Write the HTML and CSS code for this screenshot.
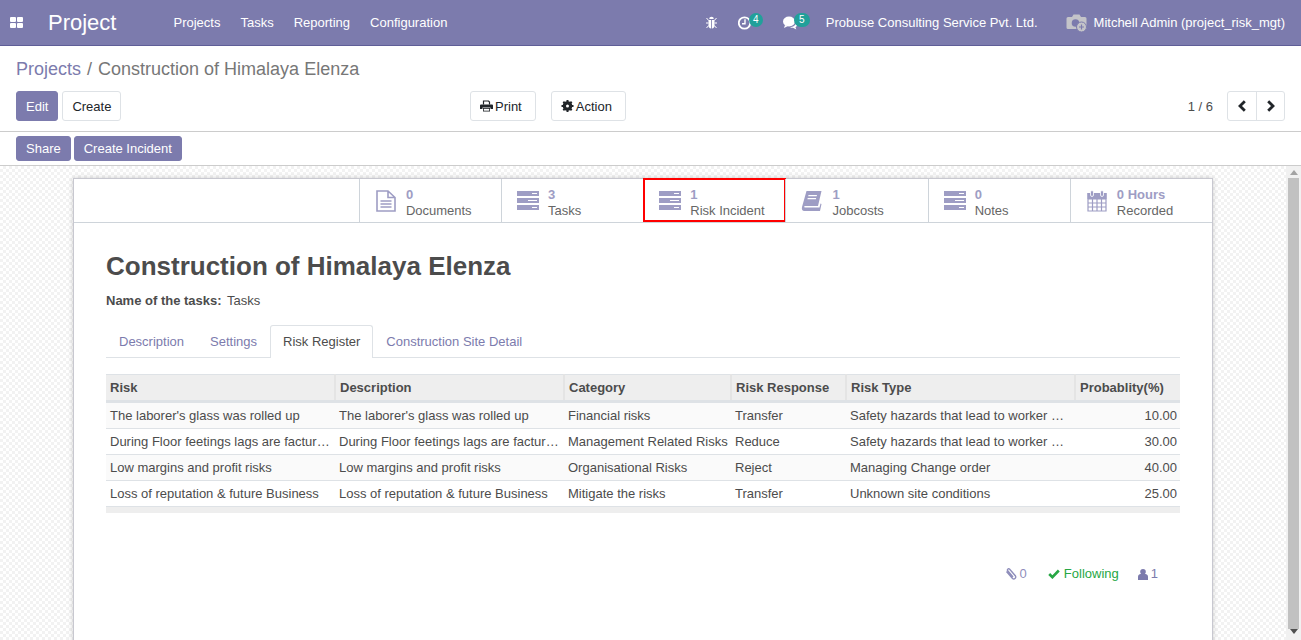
FILE: index.html
```html
<!DOCTYPE html>
<html lang="en">
  <head>
    <meta charset="UTF-8" />
    <title>Construction of Himalaya Elenza - Project</title>
    <link rel="stylesheet" href="styles.css">
  </head>
  <body>
    <!-- Top menu -->
    <header class="navbar">
      <svg class="apps-icon" width="14" height="12" viewBox="0 0 14 12"><path d="M0 1a1 1 0 0 1 1-1h4a1 1 0 0 1 1 1v3a1 1 0 0 1-1 1H1a1 1 0 0 1-1-1zM7 1a1 1 0 0 1 1-1h4a1 1 0 0 1 1 1v3a1 1 0 0 1-1 1H8a1 1 0 0 1-1-1zM0 7a1 1 0 0 1 1-1h4a1 1 0 0 1 1 1v3a1 1 0 0 1-1 1H1a1 1 0 0 1-1-1zM7 7a1 1 0 0 1 1-1h4a1 1 0 0 1 1 1v3a1 1 0 0 1-1 1H8a1 1 0 0 1-1-1z" fill="#fff"/></svg>
      <span class="brand">Project</span>
      <nav class="menu">
        <a href="#">Projects</a>
        <a href="#">Tasks</a>
        <a href="#">Reporting</a>
        <a href="#">Configuration</a>
      </nav>
      <div class="systray">
        <svg class="bug" width="13" height="13" viewBox="0 0 13 13"><path d="M4.200 3a2.300 2.300 0 0 1 4.600 0zM3.500 4h2.600v8.500a3 3 0 0 1-2.600-3zM6.900 4h2.600v5.500a3 3 0 0 1-2.600 3z" fill="#fff"/><path d="M1.500 2l2.200 2.500M11.500 2L9.300 4.500M1 7h2.500M9.500 7H12M1.500 12l2.200-2.500M11.500 12L9.300 9.500" fill="none" stroke="#fff" stroke-width="1"/></svg>
        <span class="tray-item">
          <svg width="14" height="14" viewBox="0 0 14 14"><circle cx="6.500" cy="7" r="5.700" fill="none" stroke="#fff" stroke-width="1.800"/><path d="M7 3.300V7.800H4" fill="none" stroke="#fff" stroke-width="1.400"/></svg>
          <span class="count">4</span>
        </span>
        <span class="tray-item tray-chat">
          <svg width="15" height="14" viewBox="0 0 15 14"><ellipse cx="6" cy="5.500" rx="6" ry="5" fill="#fff"/><path d="M2 9L1 12l4-2z" fill="#fff"/><path d="M13 6.500c1.500 1.500 1.500 3.500-.5 4.700l.8 2.300-3.300-1.700c-1 0-2 0-3-.6 3 0 6-2 6-4.700z" fill="#fff"/></svg>
          <span class="count count-wide">5</span>
        </span>
        <span class="company">Probuse Consulting Service Pvt. Ltd.</span>
        <span class="user">
          <svg width="22" height="20" viewBox="0 0 22 20"><path d="M2 4h4l1.500-2.500h6L15 4h4a1.500 1.500 0 0 1 1.500 1.500V16H2a1.500 1.500 0 0 1-1.500-1.500v-9A1.500 1.500 0 0 1 2 4z" fill="#c4c4c9"/><circle cx="9.500" cy="10" r="3.800" fill="#7c7bad"/><circle cx="15.500" cy="14" r="5" fill="#c4c4c9" stroke="#7c7bad" stroke-width="1"/><path d="M15.500 11.500v5M13 14h5" stroke="#7c7bad" stroke-width="1.200"/></svg>
          Mitchell Admin (project_risk_mgt)
        </span>
      </div>
    </header>

    <!-- Breadcrumb and buttons -->
    <section class="control-panel">
      <ol class="breadcrumb">
        <li><a href="#">Projects</a></li>
        <li class="sep">/</li>
        <li class="current">Construction of Himalaya Elenza</li>
      </ol>
      <div class="cp-row">
        <div class="cp-left">
          <button class="btn btn-primary">Edit</button>
          <button class="btn">Create</button>
        </div>
        <div class="cp-sidebar">
          <button class="btn">
            <svg width="13" height="12" viewBox="0 0 13 12"><path d="M3.500 4.500V1h5l1 1v2.500" fill="none" stroke="#212529" stroke-width="1.200"/><path d="M1 4.500h11a1 1 0 0 1 1 1V9h-2.500V7.500h-8V9H0V5.500a1 1 0 0 1 1-1z" fill="#212529"/><path d="M3 8h7v3.500H3z" fill="#212529"/><path d="M3.800 8.800h5.400v1.900H3.800z" fill="#fff"/></svg>
            Print
          </button>
          <button class="btn">
            <svg width="13" height="12" viewBox="0 0 13 12"><circle cx="6.500" cy="6" r="3.500" fill="none" stroke="#212529" stroke-width="2.600"/><path d="M6.500 0v12M.5 6h12M2.300 1.800l8.400 8.400M10.700 1.800l-8.400 8.400" stroke="#212529" stroke-width="2"/><circle cx="6.500" cy="6" r="1.500" fill="#fff"/></svg>
            Action
          </button>
        </div>
        <div class="pager">
          <span class="pager-value">1 / 6</span>
          <div class="pager-buttons">
            <button class="btn-page"><svg width="10" height="12" viewBox="0 0 10 12"><path d="M7.800 1.200L3 6l4.800 4.800" fill="none" stroke="#212529" stroke-width="2.800"/></svg></button>
            <button class="btn-page"><svg width="10" height="12" viewBox="0 0 10 12"><path d="M2.200 1.200L7 6l-4.800 4.800" fill="none" stroke="#212529" stroke-width="2.800"/></svg></button>
          </div>
        </div>
      </div>
    </section>

    <div class="statusbar">
      <button class="btn btn-primary btn-small">Share</button>
      <button class="btn btn-primary btn-small">Create Incident</button>
    </div>

    <div class="content">
      <div class="form-background">
        <div class="sheet">
          <div class="button-box">
            <a class="stat-button" href="#">
              <svg class="stat-icon" width="20" height="22" viewBox="0 0 20 22"><path d="M1 1h11l7 6.500V21H1zM12 1v6.500h7M4.500 11h11M4.500 14h11M4.500 17h11" fill="none" stroke="#9e9dc4" stroke-width="1.600"/></svg>
              <span class="stat-text"><b>0</b><span>Documents</span></span>
            </a>
            <a class="stat-button" href="#">
              <svg class="stat-icon" width="22" height="19" viewBox="0 0 22 19"><path d="M0 0h22v5H0zM0 7h22v5H0zM0 14h22v5H0z" fill="#9e9dc4"/><path d="M15 2h5v1h-5zM11 9h9v1h-9zM15 16h5v1h-5z" fill="#fff"/></svg>
              <span class="stat-text"><b>3</b><span>Tasks</span></span>
            </a>
            <a class="stat-button stat-highlight" href="#">
              <svg class="stat-icon" width="22" height="19" viewBox="0 0 22 19"><path d="M0 0h22v5H0zM0 7h22v5H0zM0 14h22v5H0z" fill="#9e9dc4"/><path d="M15 2h5v1h-5zM11 9h9v1h-9zM15 16h5v1h-5z" fill="#fff"/></svg>
              <span class="stat-text"><b>1</b><span>Risk Incident</span></span>
            </a>
            <a class="stat-button" href="#">
              <svg class="stat-icon" width="21" height="20" viewBox="0 0 21 20"><path d="M5 0h15l-3.500 15H3.500c-1 0-1.200 1.500 0 1.500H18l1-4 1 .5-1.500 7H3C.5 20 0 18 .5 16z" fill="#9e9dc4"/><path d="M7 4h8.500l-.3 1.300H6.700zM6.200 7h8.500l-.3 1.300H5.900z" fill="#fff"/></svg>
              <span class="stat-text"><b>1</b><span>Jobcosts</span></span>
            </a>
            <a class="stat-button" href="#">
              <svg class="stat-icon" width="22" height="19" viewBox="0 0 22 19"><path d="M0 0h22v5H0zM0 7h22v5H0zM0 14h22v5H0z" fill="#9e9dc4"/><path d="M15 2h5v1h-5zM11 9h9v1h-9zM15 16h5v1h-5z" fill="#fff"/></svg>
              <span class="stat-text"><b>0</b><span>Notes</span></span>
            </a>
            <a class="stat-button" href="#">
              <svg class="stat-icon" width="21" height="22" viewBox="0 0 21 22"><path d="M1.500 3.500h18V21h-18zM1.500 9h18M1.500 13h18M1.500 17h18M6 9v12M10.500 9v12M15 9v12" fill="none" stroke="#9e9dc4" stroke-width="1.200"/><path d="M1 3h19v6H1z" fill="#9e9dc4"/><rect x="4" y="0.500" width="3" height="6" rx="1.500" fill="#9e9dc4" stroke="#fff" stroke-width=".8"/><rect x="14" y="0.500" width="3" height="6" rx="1.500" fill="#9e9dc4" stroke="#fff" stroke-width=".8"/></svg>
              <span class="stat-text"><b>0 Hours</b><span>Recorded</span></span>
            </a>
          </div>

          <div class="sheet-body">
            <h1 class="title">Construction of Himalaya Elenza</h1>
            <p class="field"><b>Name of the tasks:</b> Tasks</p>

            <ul class="tabs">
              <li><a href="#">Description</a></li>
              <li><a href="#">Settings</a></li>
              <li class="active"><a href="#">Risk Register</a></li>
              <li><a href="#">Construction Site Detail</a></li>
            </ul>

            <table class="risk-table">
              <colgroup>
                <col class="col-risk" />
                <col class="col-desc" />
                <col class="col-category" />
                <col class="col-response" />
                <col class="col-type" />
                <col />
              </colgroup>
              <thead>
                <tr>
                  <th>Risk</th>
                  <th>Description</th>
                  <th>Category</th>
                  <th>Risk Response</th>
                  <th>Risk Type</th>
                  <th>Probablity(%)</th>
                </tr>
              </thead>
              <tbody>
                <tr>
                  <td>The laborer's glass was rolled up</td>
                  <td>The laborer's glass was rolled up</td>
                  <td>Financial risks</td>
                  <td>Transfer</td>
                  <td>Safety hazards that lead to worker mishaps</td>
                  <td class="num">10.00</td>
                </tr>
                <tr>
                  <td>During Floor feetings lags are factured by workers</td>
                  <td>During Floor feetings lags are factured by workers</td>
                  <td>Management Related Risks</td>
                  <td>Reduce</td>
                  <td>Safety hazards that lead to worker mishaps</td>
                  <td class="num">30.00</td>
                </tr>
                <tr>
                  <td>Low margins and profit risks</td>
                  <td>Low margins and profit risks</td>
                  <td>Organisational Risks</td>
                  <td>Reject</td>
                  <td>Managing Change order</td>
                  <td class="num">40.00</td>
                </tr>
                <tr>
                  <td>Loss of reputation &amp; future Business</td>
                  <td>Loss of reputation &amp; future Business</td>
                  <td>Mitigate the risks</td>
                  <td>Transfer</td>
                  <td>Unknown site conditions</td>
                  <td class="num">25.00</td>
                </tr>
              </tbody>
              <tfoot>
                <tr><td colspan="6"></td></tr>
              </tfoot>
            </table>

            <div class="chatter-topbar">
              <span class="attach">
                <svg width="12" height="12" viewBox="0 0 12 12"><path d="M1.500 3.500l6 7a2 2 0 0 0 3-2.500l-6-7a1.300 1.300 0 0 0-2 1.500l5.500 6.500" fill="none" stroke="#8f8ebb" stroke-width="1.400"/></svg>
                0
              </span>
              <span class="following">
                <svg width="12" height="10" viewBox="0 0 12 10"><path d="M1.200 5l3.200 3.200L10.800 1.500" fill="none" stroke="#28a745" stroke-width="2.600"/></svg>
                Following
              </span>
              <span class="followers">
                <svg width="10" height="11" viewBox="0 0 10 11"><circle cx="5" cy="2.800" r="2.800" fill="#7c7bad"/><path d="M0 11V7.500C0 6 1.500 5 2.500 5h5C8.500 5 10 6 10 7.500V11z" fill="#7c7bad"/></svg>
                1
              </span>
            </div>
          </div>
        </div>
      </div>

      <div class="scrollbar">
        <span class="arrow-up"></span>
        <span class="thumb"></span>
        <span class="arrow-down"></span>
      </div>
    </div>
  </body>
</html>
```

FILE: styles.css
```css
/* Page */
html,
body {
  height: 100%;
}

body {
  margin: 0;
  display: flex;
  flex-direction: column;
  overflow: hidden;
  font-family: "Liberation Sans", Arial, sans-serif;
  font-size: 13px;
  color: #4c4c4c;
  background-color: #fff;
}

a {
  text-decoration: none;
  color: #7c7bad;
}

/* Top menu */
.navbar {
  flex: none;
  display: flex;
  align-items: center;
  height: 45px;
  padding: 0 16px 0 10px;
  background-color: #7c7bad;
  border-bottom: 1px solid #5f5e97;
  color: #fff;
}

.apps-icon {
  flex: none;
}

.brand {
  margin-left: 24px;
  font-size: 22px;
}

.menu {
  display: flex;
  gap: 20px;
  margin-left: 57px;
}

.menu a {
  color: #fff;
}

.systray {
  display: flex;
  align-items: center;
  margin-left: auto;
}

.tray-item {
  position: relative;
  display: flex;
  margin-left: 20px;
}

.tray-chat {
  margin-left: 31px;
}

.count {
  position: absolute;
  top: -3px;
  left: 11px;
  width: 14px;
  height: 14px;
  border-radius: 7px;
  background-color: #21a09a;
  font-size: 10px;
  line-height: 14px;
  text-align: center;
}

.count-wide {
  left: 11px;
  width: 16px;
}

.company {
  margin-left: 28px;
}

.user {
  display: flex;
  align-items: center;
  gap: 6px;
  margin-left: 28px;
}

/* Control panel */
.control-panel {
  flex: none;
  height: 86px;
  padding: 0 16px;
  box-sizing: border-box;
  border-bottom: 1px solid #ccc;
}

.breadcrumb {
  display: flex;
  gap: 6px;
  margin: 0;
  padding: 13px 0 0;
  height: 32px;
  list-style: none;
  font-size: 18px;
  line-height: 20px;
  color: #777;
}

.cp-row {
  display: flex;
  align-items: center;
}

.cp-left {
  display: flex;
  gap: 4px;
  width: 454px;
}

.cp-sidebar {
  display: flex;
  gap: 15px;
}

.btn {
  display: inline-flex;
  align-items: center;
  gap: 2px;
  height: 30px;
  padding: 0 13px 0 9px;
  border: 1px solid #dee2e6;
  border-radius: 3px;
  background-color: #fff;
  color: #212529;
  font: inherit;
}

.cp-left .btn {
  padding: 0 9px;
}

.btn-primary {
  border-color: #7c7bad;
  background-color: #7c7bad;
  color: #fff;
}

.pager {
  display: flex;
  align-items: center;
  margin-left: auto;
}

.pager-value {
  margin-right: 14px;
  color: #4c4c4c;
}

.pager-buttons {
  display: flex;
  border: 1px solid #dee2e6;
  border-radius: 3px;
}

.btn-page {
  display: flex;
  align-items: center;
  justify-content: center;
  width: 28px;
  height: 28px;
  padding: 0;
  border: 0;
  background: none;
}

.btn-page + .btn-page {
  border-left: 1px solid #dee2e6;
}

/* Status bar */
.statusbar {
  flex: none;
  display: flex;
  align-items: center;
  gap: 3px;
  height: 34px;
  padding: 0 16px;
  box-sizing: border-box;
  border-bottom: 1px solid #ccc;
}

.btn-small {
  height: 25px;
  padding: 0 9px;
}

/* Form area */
.content {
  flex: 1;
  display: flex;
  min-height: 0;
}

.form-background {
  flex: 1;
  min-width: 0;
  padding-top: 12px;
  overflow: hidden;
  background-color: #fff;
  background-image: conic-gradient(#f2f2f2 25%, #fff 0 50%, #f2f2f2 0 75%, #fff 0);
  background-size: 6px 6px;
}

.sheet {
  width: 1138px;
  height: 600px;
  margin-left: 73px;
  background-color: #fff;
  border: 1px solid #c8c8d0;
  box-shadow: 0 0 5px rgba(0, 0, 0, 0.2);
}

.button-box {
  display: flex;
  justify-content: flex-end;
  height: 43px;
  border-bottom: 1px solid #ced4da;
}

.stat-button {
  position: relative;
  display: flex;
  align-items: center;
  gap: 9px;
  width: 142.2px;
  box-sizing: border-box;
  padding-left: 15px;
  border-left: 1px solid #ced4da;
}

.stat-icon {
  flex: none;
  width: 22px;
}

.stat-text {
  display: flex;
  flex-direction: column;
  padding-top: 3px;
  color: #666;
  line-height: 15px;
}

.stat-text b {
  color: #9e9dc4;
}

.stat-text span {
  margin-top: 1px;
}

/* Red box around the selected button */
.stat-highlight::after {
  content: "";
  position: absolute;
  inset: -1px -1px 0 -1px;
  border: 2px solid #f00;
}

.sheet-body {
  padding: 0 32px;
}

.title {
  margin: 27px 0 0;
  font-size: 26px;
  line-height: 32px;
  color: #4c4c4c;
}

.field {
  margin: 9px 0 0;
  line-height: 20px;
}

.field b {
  margin-right: 2px;
}

.tabs {
  display: flex;
  margin: 14px 0 0;
  padding: 0;
  height: 32px;
  list-style: none;
  border-bottom: 1px solid #dee2e6;
}

.tabs a {
  display: block;
  padding: 0 13px;
  line-height: 33px;
}

.tabs .active {
  height: 33px;
  box-sizing: border-box;
  border: 1px solid #dee2e6;
  border-bottom: 0;
  border-radius: 3px 3px 0 0;
  background-color: #fff;
}

.tabs .active a {
  padding: 0 12px;
  line-height: 31px;
  color: #4c4c4c;
}

/* Risk table */
.risk-table {
  table-layout: fixed;
  width: 1074px;
  margin-top: 16px;
  border-collapse: collapse;
}

.col-risk,
.col-desc,
.col-type {
  width: 229px;
}

.col-category {
  width: 167px;
}

.col-response {
  width: 115px;
}

.risk-table th {
  height: 25px;
  padding: 0 3px 0 4px;
  background-color: #eee;
  border: 1px solid #dee2e6;
  border-width: 1px 0 3px 2px;
  border-left-color: #e4e4e4;
  text-align: left;
  white-space: nowrap;
}

.risk-table th:first-child {
  border-left: 0;
}

.risk-table td {
  height: 25px;
  max-width: 0;
  padding: 0 3px 0 4px;
  border-bottom: 1px solid #dee2e6;
  overflow: hidden;
  white-space: nowrap;
  text-overflow: ellipsis;
}

.risk-table tbody tr:nth-child(odd) {
  background-color: #fafafa;
}

.risk-table .num {
  text-align: right;
}

.risk-table tfoot td {
  height: 6px;
  padding: 0;
  border: 0;
  background-color: #eee;
}

/* Followers row */
.chatter-topbar {
  display: flex;
  justify-content: flex-end;
  align-items: center;
  gap: 20px;
  margin-top: 51px;
  padding-right: 22px;
  line-height: 20px;
}

.chatter-topbar span {
  display: flex;
  align-items: center;
  gap: 3px;
  color: #7c7bad;
}

.chatter-topbar .attach {
  color: #8f8ebb;
}

.chatter-topbar .following {
  gap: 4px;
  margin: 0 -1px 0 1px;
  color: #28a745;
}

/* Scroll bar */
.scrollbar {
  flex: none;
  display: flex;
  flex-direction: column;
  align-items: center;
  width: 15px;
  background-color: #f1f1f1;
}

.thumb {
  width: 11px;
  height: 456px;
  margin-top: 3px;
  background-color: #c1c1c1;
}

.arrow-up {
  margin-top: 4px;
  border: 4px solid transparent;
  border-top: 0;
  border-bottom: 5px solid #a3a3a3;
}

.arrow-down {
  margin-top: auto;
  margin-bottom: 6px;
  border: 4px solid transparent;
  border-bottom: 0;
  border-top: 5px solid #505050;
}
```
